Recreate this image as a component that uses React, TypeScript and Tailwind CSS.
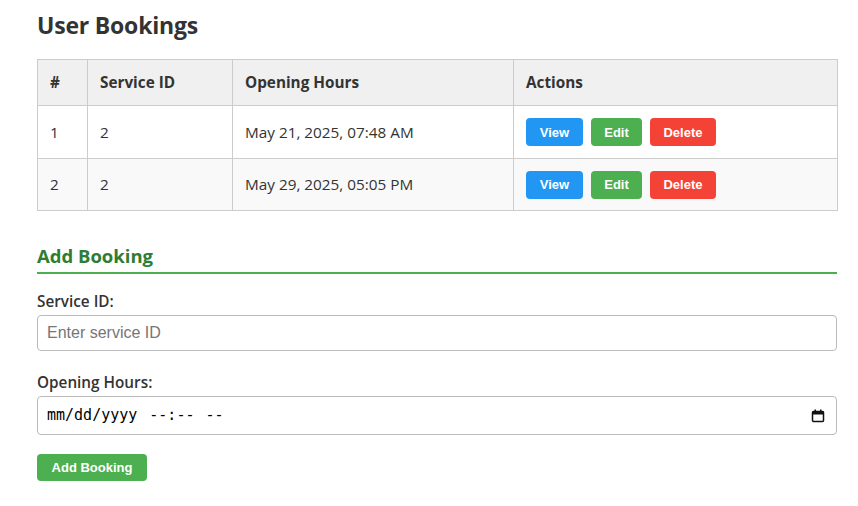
import React from "react";

const rows = [
  { id: 1, service: 2, hours: "May 21, 2025, 07:48 AM" },
  { id: 2, service: 2, hours: "May 29, 2025, 05:05 PM" },
];

export default function App() {
  const btn =
    "h-[28px] rounded-[4px] text-white text-[13px] font-bold font-['Liberation_Sans',Arial,sans-serif] leading-none";
  return (
    <div className="min-h-[506px] bg-white pl-[37px] pt-[10px] text-[#333] font-['Open_Sans','Noto_Sans',sans-serif]">
      <div className="w-[800px]">
        <h1 className="text-[23px] font-bold leading-[30px] m-0 text-[#333] tracking-[-0.2px]">User Bookings</h1>
        <table className="mt-[19px] w-[800px] border-collapse text-[15.3px] table-fixed">
          <colgroup>
            <col className="w-[50px]" />
            <col className="w-[145px]" />
            <col className="w-[281px]" />
            <col className="w-[324px]" />
          </colgroup>
          <thead>
            <tr className="bg-[#f0f0f0] h-[46px]">
              <th className="border border-[#ccc] px-[12px] text-left font-bold">#</th>
              <th className="border border-[#ccc] px-[12px] text-left font-bold">Service ID</th>
              <th className="border border-[#ccc] px-[12px] text-left font-bold">Opening Hours</th>
              <th className="border border-[#ccc] px-[12px] text-left font-bold">Actions</th>
            </tr>
          </thead>
          <tbody>
            {rows.map((r, i) => (
              <tr key={r.id} className={i % 2 === 1 ? "bg-[#f9f9f9] h-[52px]" : "bg-white h-[53px]"}>
                <td className="border border-[#ccc] px-[12px]">{r.id}</td>
                <td className="border border-[#ccc] px-[12px]">{r.service}</td>
                <td className="border border-[#ccc] px-[12px]">{r.hours}</td>
                <td className="border border-[#ccc] px-[12px]">
                  <div className="flex gap-[8px]">
                    <button className={`${btn} w-[57px] bg-[#2196f3]`}>View</button>
                    <button className={`${btn} w-[51px] bg-[#4caf50]`}>Edit</button>
                    <button className={`${btn} w-[66px] bg-[#f44336]`}>Delete</button>
                  </div>
                </td>
              </tr>
            ))}
          </tbody>
        </table>
        <h2 className="mt-[32px] text-[18.5px] font-bold leading-[26px] text-[#2e7d32] border-b-2 border-[#4caf50] pb-[3px]">
          Add Booking
        </h2>
        <div className="mt-[17px] text-[15.3px] font-semibold leading-[20px]">Service ID:</div>
        <input
          placeholder="Enter service ID"
          className="mt-[4px] block w-[800px] h-[36px] rounded-[4px] border border-[#bbb] px-[9px] text-[16px] font-['Liberation_Sans',Arial,sans-serif] placeholder:text-[#767676] text-[#333]"
        />
        <div className="mt-[21px] text-[15.3px] font-semibold leading-[20px]">Opening Hours:</div>
        <div className="mt-[4px] flex items-center w-[800px] h-[39px] rounded-[4px] border border-[#bbb] pl-[9px] pr-[11px] text-[15px] font-['DejaVu_Sans_Mono',monospace] text-black">
          <span>mm/dd/yyyy</span>
          <span className="ml-[12px]">--:--</span>
          <span className="ml-[11px]">--</span>
          <svg className="ml-auto" width="14" height="14" viewBox="0 0 14 14" aria-hidden="true">
            <rect x="1.5" y="2.5" width="11" height="10" rx="1" fill="none" stroke="#111" strokeWidth="1.5" />
            <rect x="1.5" y="2.5" width="11" height="3" fill="#111" />
            <rect x="3.5" y="0.5" width="1.5" height="2.5" fill="#111" />
            <rect x="9" y="0.5" width="1.5" height="2.5" fill="#111" />
          </svg>
        </div>
        <button className="mt-[19px] h-[27px] w-[110px] rounded-[4px] bg-[#4caf50] text-white text-[13px] font-bold font-['Liberation_Sans',Arial,sans-serif]">
          Add Booking
        </button>
      </div>
    </div>
  );
}
